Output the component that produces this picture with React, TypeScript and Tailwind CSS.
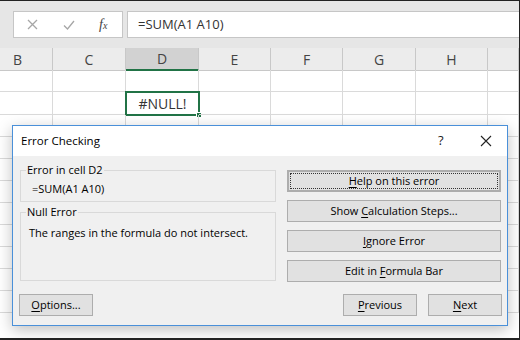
import React from 'react'

const cols = ['B', 'C', 'D', 'E', 'F', 'G', 'H', '']
const colW = 'grid-cols-[53px_73px_73px_72px_72px_73px_72px_1fr]'

function Btn({ children, className = '' }: { children: React.ReactNode; className?: string }) {
  return (
    <div
      className={`h-[22px] flex items-center justify-center bg-[#e1e1e1] border border-[#adadad] text-[11px] text-black ${className}`}
    >
      <span>{children}</span>
    </div>
  )
}

function U({ children }: { children: React.ReactNode }) {
  return <span className="underline underline-offset-2">{children}</span>
}

export default function App() {
  const rows = Array.from({ length: 11 })

  return (
    <div
      className="relative w-[520px] h-[340px] overflow-hidden bg-white border-t border-r border-b-2 border-[#222]"
      style={{ fontFamily: '"Open Sans", "Noto Sans", sans-serif' }}
    >
      {/* Ribbon strip */}
      <div className="h-[10px] bg-[#e6e6e6]" />

      {/* Formula bar */}
      <div className="h-[27px] flex bg-[#e6e6e6]">
        <div className="ml-[13px] w-[110px] bg-white border border-[#c6c6c6] flex items-center">
          <svg className="ml-[13px]" width="11" height="11" viewBox="0 0 11 11">
            <path d="M1 1L10 10M10 1L1 10" stroke="#a6a6a6" strokeWidth="1.3" />
          </svg>
          <svg className="ml-[25px]" width="12" height="10" viewBox="0 0 12 10">
            <path d="M1 5.5L4.5 9L11 1" stroke="#a6a6a6" strokeWidth="1.3" fill="none" />
          </svg>
          <span
            className="ml-[24px] italic text-[#444] text-[14px] leading-none"
            style={{ fontFamily: '"Liberation Serif", serif' }}
          >
            f<span className="text-[10px]">x</span>
          </span>
        </div>
        <div className="ml-[4px] flex-1 bg-white border border-r-0 border-[#c6c6c6] flex items-center pl-[10px] text-[13px] text-[#333]">
          =SUM(A1 A10)
        </div>
      </div>

      <div className="h-[10px] bg-[#e6e6e6]" />

      {/* Column headers */}
      <div className={`grid ${colW} h-[22px] bg-[#ececec]`}>
        {cols.map((c, i) => (
          <div
            key={i}
            className={`flex items-center text-[14px] text-[#444] border-r border-[#c8c8c8] ${
              i === 0 ? 'justify-end pr-[30px]' : 'justify-center'
            } ${c === 'D' ? 'bg-[#d2d2d2] border-b-2 border-b-[#217346]' : 'border-b border-b-[#c8c8c8]'}`}
          >
            {c}
          </div>
        ))}
      </div>

      {/* Grid rows */}
      {rows.map((_, r) => (
        <div key={r} className={`grid ${colW} ${r === 1 ? 'h-[23px]' : 'h-[22px]'}`}>
          {cols.map((c, i) => (
            <div key={i} className="relative border-r border-b border-[#dadada]">
              {r === 1 && c === 'D' && (
                <div className="absolute -left-[1px] -top-[1px] w-[75px] h-[25px] border-2 border-[#217346] flex items-center justify-center text-[14px] text-[#333]">
                  #NULL!
                  <div className="absolute -right-[4px] -bottom-[4px] w-[6px] h-[6px] bg-[#217346] border border-white" />
                </div>
              )}
            </div>
          ))}
        </div>
      ))}

      {/* Error Checking dialog */}
      <div className="absolute left-[12px] top-[124px] w-[496px] h-[201px] border border-[#4a90d9] bg-[#f0f0f0] flex flex-col shadow-[0_4px_14px_rgba(0,0,0,0.25)]">
        <div className="h-[30px] bg-white flex items-center pl-[8px] text-[11.5px] text-black">
          <span className="flex-1">Error Checking</span>
          <span className="w-[12px] text-[13px] text-[#222]">?</span>
          <svg className="ml-[30px] mr-[15px]" width="12" height="12" viewBox="0 0 12 12">
            <path d="M1 1L11 11M11 1L1 11" stroke="#222" strokeWidth="1.1" />
          </svg>
        </div>

        <div className="flex-1 flex flex-col pt-[14px] pl-[7px] pr-[5px] text-[11px] text-black">
          <div className="flex gap-[11px]">
            <div className="w-[256px] flex flex-col gap-[10px]">
              <div className="relative h-[32px] border border-[#d9d9d9] pl-[11px] pt-[10px]">
                <span className="absolute left-[5px] -top-[9px] px-[1px] bg-[#f0f0f0]">Error in cell D2</span>
                =SUM(A1 A10)
              </div>
              <div className="relative h-[69px] border border-[#d9d9d9] pl-[8px] pt-[12px]">
                <span className="absolute left-[5px] -top-[9px] px-[1px] bg-[#f0f0f0]">Null Error</span>
                The ranges in the formula do not intersect.
              </div>
            </div>
            <div className="w-[214px] flex flex-col gap-[8px]">
              <Btn className="border-2 border-[#3b88d9] outline-1 outline-dotted outline-[#333] outline-offset-[-4px]">
                <U>H</U>elp on this error
              </Btn>
              <Btn>
                Show <U>C</U>alculation Steps...
              </Btn>
              <Btn>
                <U>I</U>gnore Error
              </Btn>
              <Btn>
                Edit in <U>F</U>ormula Bar
              </Btn>
            </div>
          </div>

          <div className="mt-[12px] flex gap-[11px]">
            <Btn className="w-[74px] -ml-[1px]">
              <U>O</U>ptions...
            </Btn>
            <Btn className="w-[74px] ml-auto">
              <U>P</U>revious
            </Btn>
            <Btn className="w-[74px]">
              <U>N</U>ext
            </Btn>
          </div>
        </div>
      </div>
    </div>
  )
}
